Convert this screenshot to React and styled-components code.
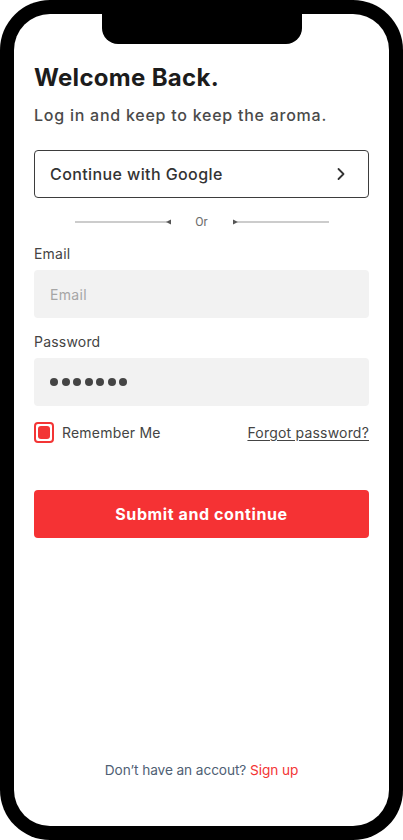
import React from "react"
import styled, { createGlobalStyle } from "styled-components"

const GlobalStyle = createGlobalStyle`
  body {
    margin: 0;
    background: #ffffff;
    font-family: "Inter", "Liberation Sans", sans-serif;
  }
`

const Frame = styled.div`
  width: 403px;
  height: 840px;
  box-sizing: border-box;
  padding: 14px;
  background: #000;
  border-radius: 50px;
`
const Screen = styled.div`
  height: 100%;
  background: #fff;
  border-radius: 36px;
  display: flex;
  flex-direction: column;
  overflow: hidden;
`
const Notch = styled.div`
  width: 200px;
  height: 30px;
  margin: 0 auto;
  background: #000;
  border-radius: 0 0 16px 16px;
  flex-shrink: 0;
`
const Content = styled.div`
  flex: 1;
  display: flex;
  flex-direction: column;
  padding: 20px 20px 0;
`
const Title = styled.h1`
  margin: 0;
  font-size: 24px;
  line-height: 28px;
  font-weight: 700;
  color: #1c1c1c;
  letter-spacing: 0.3px;
`
const Subtitle = styled.p`
  margin: 12px 0 0;
  font-size: 16px;
  line-height: 22px;
  font-weight: 500;
  color: #4a4a4a;
  letter-spacing: 0.75px;
`
const GoogleButton = styled.button`
  margin-top: 24px;
  height: 48px;
  display: flex;
  align-items: center;
  justify-content: space-between;
  padding: 0 20px 0 15px;
  background: #fff;
  border: 1px solid #3d3d3d;
  border-radius: 4px;
  font-family: inherit;
  font-size: 16px;
  font-weight: 500;
  color: #333;
  letter-spacing: 0.4px;
`
const Divider = styled.div`
  display: flex;
  align-items: center;
  justify-content: center;
  margin-top: 16px;
  height: 16px;
`
const OrText = styled.span`
  width: 62px;
  text-align: center;
  font-family: "Roboto", sans-serif;
  font-size: 12px;
  color: #6b6b6b;
`
const Label = styled.label`
  display: block;
  margin-top: 15px;
  font-size: 14px;
  line-height: 18px;
  color: #444;
  letter-spacing: 0.2px;
`
const Field = styled.div`
  margin-top: 7px;
  height: 48px;
  display: flex;
  align-items: center;
  padding: 0 16px;
  background: #f2f2f2;
  border-radius: 4px;
  font-size: 14px;
  color: ${(p) => (p.$placeholder ? "#a6a6a6" : "#444")};
  letter-spacing: 0.3px;
`
const Dot = styled.span`
  width: 8px;
  height: 8px;
  border-radius: 50%;
  background: #454545;
  margin-right: 3.5px;
`
const OptionsRow = styled.div`
  margin-top: 16px;
  display: flex;
  align-items: center;
  justify-content: space-between;
`
const Remember = styled.div`
  display: flex;
  align-items: center;
  gap: 8px;
  font-size: 14px;
  color: #444;
  letter-spacing: 0.2px;
`
const Check = styled.span`
  width: 20px;
  height: 21px;
  box-sizing: border-box;
  border: 2px solid #f33535;
  border-radius: 4px;
  display: flex;
  align-items: center;
  justify-content: center;
  &::after {
    content: "";
    width: 12px;
    height: 13px;
    border-radius: 3px;
    background: #f33535;
  }
`
const Forgot = styled.a`
  font-size: 14px;
  color: #444;
  text-decoration: underline;
  text-underline-offset: 2px;
  letter-spacing: 0.2px;
`
const SubmitButton = styled.button`
  margin-top: 47px;
  height: 48px;
  border: none;
  border-radius: 4px;
  background: #f53234;
  color: #fff;
  font-family: inherit;
  font-size: 16px;
  font-weight: 700;
  letter-spacing: 0.6px;
`
const Footer = styled.p`
  margin: auto 0 48px;
  text-align: center;
  font-size: 13.7px;
  color: #4f6074;
  letter-spacing: -0.1px;
`
const SignUp = styled.span`
  color: #f33535;
`

const LeftLine = () => (
  <svg width="96" height="6" viewBox="0 0 96 6">
    <line x1="0" y1="3" x2="92" y2="3" stroke="#9a9a9a" strokeWidth="1.2" />
    <polygon points="91,3 96,0.5 96,5.5" fill="#555" />
  </svg>
)
const RightLine = () => (
  <svg width="96" height="6" viewBox="0 0 96 6">
    <polygon points="5,3 0,0.5 0,5.5" fill="#555" />
    <line x1="4" y1="3" x2="96" y2="3" stroke="#9a9a9a" strokeWidth="1.2" />
  </svg>
)
const Chevron = () => (
  <svg width="14" height="14" viewBox="0 0 14 14" fill="none">
    <path d="M4.5 2 L9.5 7 L4.5 12" stroke="#333" strokeWidth="1.8" strokeLinecap="round" strokeLinejoin="round" />
  </svg>
)

const App = () => {
  return (
    <>
      <GlobalStyle />
      <Frame>
        <Screen>
          <Notch />
          <Content>
            <Title>Welcome Back.</Title>
            <Subtitle>Log in and keep to keep the aroma.</Subtitle>
            <GoogleButton>
              Continue with Google
              <Chevron />
            </GoogleButton>
            <Divider>
              <LeftLine />
              <OrText>Or</OrText>
              <RightLine />
            </Divider>
            <Label>Email</Label>
            <Field $placeholder>Email</Field>
            <Label>Password</Label>
            <Field>
              {Array.from({ length: 7 }).map((_, i) => (
                <Dot key={i} />
              ))}
            </Field>
            <OptionsRow>
              <Remember>
                <Check />
                Remember Me
              </Remember>
              <Forgot>Forgot password?</Forgot>
            </OptionsRow>
            <SubmitButton>Submit and continue</SubmitButton>
            <Footer>
              Don’t have an accout? <SignUp>Sign up</SignUp>
            </Footer>
          </Content>
        </Screen>
      </Frame>
    </>
  )
}

export default App
